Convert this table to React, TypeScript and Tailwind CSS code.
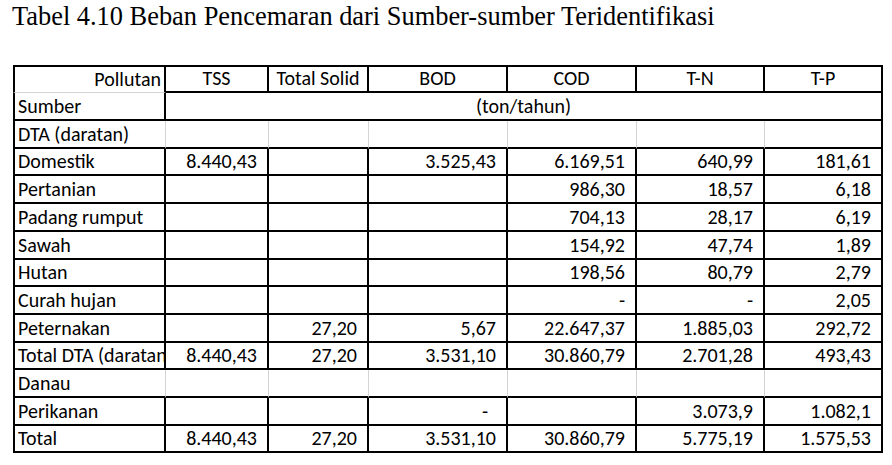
const cols = [153, 103, 100, 139, 129, 128, 118]

type Row = { cells: string[]; light?: boolean; dashPad?: boolean }

const rows: Row[] = [
  { cells: ['DTA (daratan)', '', '', '', '', '', ''], light: true },
  { cells: ['Domestik', '8.440,43', '', '3.525,43', '6.169,51', '640,99', '181,61'] },
  { cells: ['Pertanian', '', '', '', '986,30', '18,57', '6,18'] },
  { cells: ['Padang rumput', '', '', '', '704,13', '28,17', '6,19'] },
  { cells: ['Sawah', '', '', '', '154,92', '47,74', '1,89'] },
  { cells: ['Hutan', '', '', '', '198,56', '80,79', '2,79'] },
  { cells: ['Curah hujan', '', '', '', '-', '-', '2,05'] },
  { cells: ['Peternakan', '', '27,20', '5,67', '22.647,37', '1.885,03', '292,72'] },
  { cells: ['Total DTA (daratan)', '8.440,43', '27,20', '3.531,10', '30.860,79', '2.701,28', '493,43'] },
  { cells: ['Danau', '', '', '', '', '', ''], light: true },
  { cells: ['Perikanan', '', '', '-', '', '3.073,9', '1.082,1'], dashPad: true },
  { cells: ['Total', '8.440,43', '27,20', '3.531,10', '30.860,79', '5.775,19', '1.575,53'] },
]

const headers = ['TSS', 'Total Solid', 'BOD', 'COD', 'T-N', 'T-P']

const cellBase = 'border-b-2 border-b-black overflow-hidden whitespace-nowrap align-bottom leading-[22px] pb-[2px]'

export default function App() {
  return (
    <div className="w-[892px] h-[465px] bg-white text-black pl-[12px] pt-[3px] font-['Liberation_Serif']">
      <p className="text-[26.4px] leading-none font-['Liberation_Serif']">
        Tabel 4.10 Beban Pencemaran dari Sumber-sumber Teridentifikasi
      </p>

      <table className="mt-[36px] ml-[1px] w-[870px] table-fixed border-separate border-spacing-0 text-[20px] font-[Carlito]">
        <colgroup>
          {cols.map((w, i) => (
            <col key={i} style={{ width: w }} />
          ))}
        </colgroup>
        <tbody>
          <tr className="h-[27.7px]">
            <td className="border-t-2 border-t-black border-l-2 border-l-black border-r-2 border-r-black border-b border-b-[#d4d4d4] align-bottom leading-[22px] pb-[2px] text-right pr-[3px]">
              Pollutan
            </td>
            {headers.map((h) => (
              <td key={h} className={`${cellBase} border-t-2 border-t-black border-r-2 border-r-black text-center`}>
                {h}
              </td>
            ))}
          </tr>
          <tr className="h-[27.7px]">
            <td className={`${cellBase} border-l-2 border-l-black border-r-2 border-r-black pl-[3px]`}>Sumber</td>
            <td colSpan={6} className={`${cellBase} border-r-2 border-r-black text-center`}>
              (ton/tahun)
            </td>
          </tr>
          {rows.map((r) => (
            <tr key={r.cells[0]} className="h-[27.7px]">
              {r.cells.map((c, i) => {
                const last = i === r.cells.length - 1
                const right =
                  r.light && !last ? 'border-r border-r-[#d4d4d4]' : 'border-r-2 border-r-black'
                if (i === 0) {
                  return (
                    <td key={i} className={`${cellBase} ${right} border-l-2 border-l-black pl-[3px] text-left`}>
                      {c}
                    </td>
                  )
                }
                const pad = r.dashPad && c === '-' ? 'pr-[18px]' : 'pr-[10px]'
                return (
                  <td key={i} className={`${cellBase} ${right} ${pad} text-right`}>
                    {c}
                  </td>
                )
              })}
            </tr>
          ))}
        </tbody>
      </table>
    </div>
  )
}
